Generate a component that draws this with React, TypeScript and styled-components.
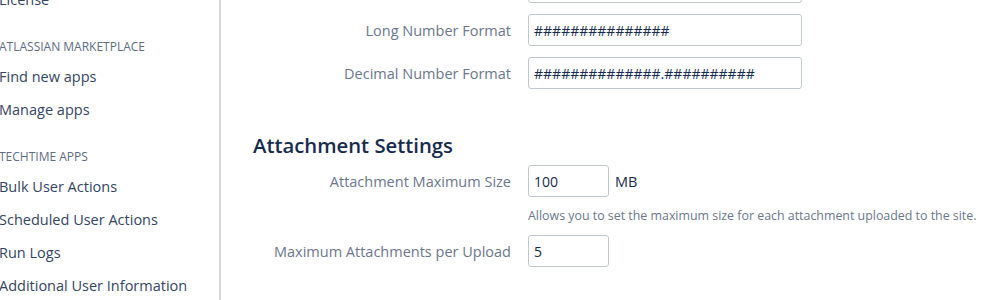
import React from "react";
import styled, { createGlobalStyle } from "styled-components";

const GlobalStyle = createGlobalStyle`
  html, body {
    margin: 0;
    padding: 0;
    background: #fff;
    font-family: "Open Sans", "Noto Sans", sans-serif;
    color: #172b4d;
  }
`;

const Page = styled.div`
  display: flex;
  width: 998px;
  height: 300px;
  overflow: hidden;
`;

const Sidebar = styled.nav`
  flex-shrink: 0;
  border-right: 2px solid #d5d8dd;
  box-sizing: border-box;
  width: 221px;
`;

const NavList = styled.div`
  margin-top: -17px;
  margin-left: -1px;
  display: flex;
  flex-direction: column;
`;

const NavHeading = styled.div`
  font-size: 12px;
  line-height: 20px;
  text-transform: uppercase;
  color: #5e6c84;
  margin: 21px 0 3px;
`;

const NavLink = styled.a`
  font-size: 14.5px;
  line-height: 33px;
  color: #344563;
  text-decoration: none;
  white-space: nowrap;
`;

const Main = styled.main`
  flex: 1;
  padding-left: 32px;
`;

const Form = styled.div`
  margin-top: -29px;
  display: flex;
  flex-direction: column;
`;

const Row = styled.div<{ $gap?: number }>`
  display: grid;
  grid-template-columns: 258px 1fr;
  column-gap: 17px;
  align-items: center;
  margin-bottom: ${(p) => p.$gap ?? 11}px;
`;

const Label = styled.label`
  text-align: right;
  font-size: 14.5px;
  color: #6b778c;
  white-space: nowrap;
`;

const Field = styled.div`
  display: flex;
  align-items: center;
  gap: 6px;
`;

const Input = styled.input<{ $width: number }>`
  box-sizing: border-box;
  width: ${(p) => p.$width}px;
  height: 32px;
  border: 1.5px solid #c1c7d0;
  border-radius: 3px;
  padding: 0 5px;
  font-family: inherit;
  font-size: 14px;
  color: #172b4d;
  background: #fff;
  outline: none;
`;

const Unit = styled.span`
  font-size: 14.5px;
  color: #172b4d;
`;

const Description = styled.div`
  grid-column: 2;
  font-size: 12.4px;
  color: #6b778c;
  margin: 10px 0 11px;
  white-space: nowrap;
`;

const SectionTitle = styled.h2`
  margin: 44px 0 8px;
  font-size: 20.3px;
  line-height: 24px;
  font-weight: 600;
  color: #172b4d;
`;

const nav = [
  { heading: null, items: ["License"] },
  { heading: "Atlassian Marketplace", items: ["Find new apps", "Manage apps"] },
  {
    heading: "Techtime Apps",
    items: ["Bulk User Actions", "Scheduled User Actions", "Run Logs", "Additional User Information"],
  },
];

export default function App() {
  return (
    <>
      <GlobalStyle />
      <Page>
        <Sidebar>
          <NavList>
            {nav.map((group, i) => (
              <React.Fragment key={i}>
                {group.heading && <NavHeading>{group.heading}</NavHeading>}
                {group.items.map((item) => (
                  <NavLink key={item} href="#">
                    {item}
                  </NavLink>
                ))}
              </React.Fragment>
            ))}
          </NavList>
        </Sidebar>
        <Main>
          <Form>
            <Row>
              <Label>Short Number Format</Label>
              <Field>
                <Input $width={274} defaultValue="###" />
              </Field>
            </Row>
            <Row>
              <Label>Long Number Format</Label>
              <Field>
                <Input $width={274} defaultValue="###############" />
              </Field>
            </Row>
            <Row $gap={0}>
              <Label>Decimal Number Format</Label>
              <Field>
                <Input $width={274} defaultValue="##############.##########" />
              </Field>
            </Row>
            <SectionTitle>Attachment Settings</SectionTitle>
            <Row $gap={0}>
              <Label>Attachment Maximum Size</Label>
              <Field>
                <Input $width={81} defaultValue="100" />
                <Unit>MB</Unit>
              </Field>
              <Description>Allows you to set the maximum size for each attachment uploaded to the site.</Description>
            </Row>
            <Row>
              <Label>Maximum Attachments per Upload</Label>
              <Field>
                <Input $width={81} defaultValue="5" />
              </Field>
            </Row>
          </Form>
        </Main>
      </Page>
    </>
  );
}
